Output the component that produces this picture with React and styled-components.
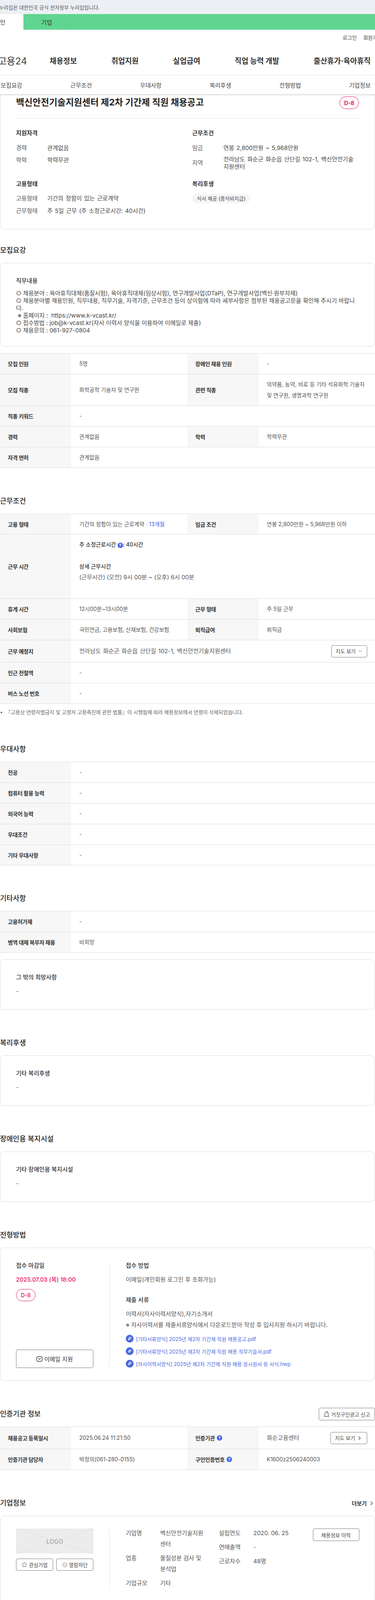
import styled, { createGlobalStyle } from "styled-components";
import { ChevronDown, ChevronRight, Star } from "lucide-react";

const Global = createGlobalStyle`
  html, body {
    margin: 0;
    padding: 0;
    background: #fff;
    overflow-x: hidden;
  }
  body {
    font-family: Inter, "Noto Sans CJK KR", sans-serif;
    font-size: 14px;
    color: #444;
  }
  * { box-sizing: border-box; }
`;

function Help() {
  return <HelpMark>?</HelpMark>;
}

function ClipIcon() {
  return (
    <svg width="20" height="20" viewBox="0 0 20 20">
      <circle cx="10" cy="10" r="10" fill="#4a68e0" />
      <path
        d="M7.2 13.6c-1.3-1.2-.6-3.4.9-5l1.8-1.9c1-.9 2.6-1.3 3.4-.4.9 1 .2 2.6-.7 3.5l-2.2 2.2c-.7.6-1.6.8-2 .3-.5-.5-.2-1.3.4-1.9l2-2"
        fill="none"
        stroke="#fff"
        strokeWidth="1.2"
        strokeLinecap="round"
      />
    </svg>
  );
}

function MailIcon() {
  return (
    <svg width="16" height="16" viewBox="0 0 16 16">
      <rect x="1" y="2" width="14" height="12" rx="3.5" fill="none" stroke="#333" strokeWidth="1.4" />
      <path d="M5 6.5l3 2.6 3-2.6" fill="none" stroke="#333" strokeWidth="1.4" strokeLinecap="round" />
    </svg>
  );
}

function BellIcon() {
  return (
    <svg width="14" height="16" viewBox="0 0 14 16">
      <path d="M2.5 14l.4-8a4.1 4.1 0 0 1 8.2 0l.4 8" fill="none" stroke="#333" strokeWidth="1.1" />
      <path d="M.5 14.2h13" stroke="#333" strokeWidth="1.1" />
      <path d="M7 3.4a2.4 2.4 0 0 1 2.2 2" fill="none" stroke="#333" strokeWidth="1" />
    </svg>
  );
}

function BlockIcon() {
  return (
    <svg width="14" height="14" viewBox="0 0 14 14">
      <circle cx="7" cy="7" r="7" fill="#d6d6d6" />
      <path d="M4.5 4.5l5 5M9.5 4.5l-5 5" stroke="#fff" strokeWidth="1.4" strokeLinecap="round" />
    </svg>
  );
}

function App() {
  return (
    <Page>
      <Global />
      <Header>
        <GovBar>
          <GovText>이 누리집은 대한민국 공식 전자정부 누리집입니다.</GovText>
        </GovBar>
        <UserTabs>
          <UserTab $active>개인</UserTab>
          <UserTab>기업</UserTab>
        </UserTabs>
        <Util>
          <span>로그인</span>
          <span>회원가입</span>
        </Util>
        <Nav>
          <Logo>고용24</Logo>
          <NavItem>채용정보</NavItem>
          <NavItem>취업지원</NavItem>
          <NavItem>실업급여</NavItem>
          <NavItem>직업 능력 개발</NavItem>
          <NavItem>출산휴가·육아휴직</NavItem>
        </Nav>
        <Anchors>
          <span>모집요강</span>
          <span>근무조건</span>
          <span>우대사항</span>
          <span>복리후생</span>
          <span>전형방법</span>
          <span>기업정보</span>
        </Anchors>
      </Header>

      <SummaryCard>
        <TitleRow>
          <Title>백신안전기술지원센터 제2차 기간제 직원 채용공고</Title>
          <DDay>D-8</DDay>
        </TitleRow>
        <SummaryGrid>
          <div>
            <GroupTitle>지원자격</GroupTitle>
            <InfoRow><InfoKey>경력</InfoKey><span>관계없음</span></InfoRow>
            <InfoRow><InfoKey>학력</InfoKey><span>학력무관</span></InfoRow>
          </div>
          <div>
            <GroupTitle>근무조건</GroupTitle>
            <InfoRow><InfoKey>임금</InfoKey><span>연봉 2,800만원 ~ 5,968만원</span></InfoRow>
            <InfoRow><InfoKey>지역</InfoKey><AreaText>전라남도 화순군 화순읍 산단길 102-1, 백신안전기술지원센터</AreaText></InfoRow>
          </div>
          <div>
            <GroupTitle>고용형태</GroupTitle>
            <InfoRow><InfoKey>고용형태</InfoKey><span>기간의 정함이 있는 근로계약</span></InfoRow>
            <InfoRow><InfoKey>근무형태</InfoKey><span>주 5일 근무 (주 소정근로시간: 40시간)</span></InfoRow>
          </div>
          <div>
            <GroupTitle>복리후생</GroupTitle>
            <Chip>식사 제공 (중식비지급)</Chip>
          </div>
        </SummaryGrid>
      </SummaryCard>

      <Section $first>
        <Heading>모집요강</Heading>
        <TextCard>
          <CardTitle>직무내용</CardTitle>
          <JobText>
            ○ 채용분야 : 육아휴직대체(품질시험), 육아휴직대체(임상시험), 연구개발사업(DTaP), 연구개발사업(백신·원부자재)
            <br />○ 채용분야별 채용인원, 직무내용, 직무기술, 자격기준, 근무조건 등이 상이함에 따라 세부사항은 첨부된 채용공고문을 확인해 주시기 바랍니다.
            <br />&nbsp;※ 홈페이지 :&nbsp; https://www.k-vcast.kr/
            <br />○ 접수방법 : job@k-vcast.kr(자사 이력서 양식을 이용하여 이메일로 제출)
            <br />○ 채용문의 : 061-927-0804
          </JobText>
        </TextCard>
        <Table $gap>
          <Row>
            <Th>모집 인원</Th><Td>5명</Td>
            <Th>장애인 채용 인원</Th><Td>-</Td>
          </Row>
          <Row $h={81}>
            <Th>모집 직종</Th><Td>화학공학 기술자 및 연구원</Td>
            <Th>관련 직종</Th><Td>의약품, 농약, 비료 등 기타 석유화학 기술자 및 연구원, 생명과학 연구원</Td>
          </Row>
          <Row $wide>
            <Th>직종 키워드</Th><Td>-</Td>
          </Row>
          <Row>
            <Th>경력</Th><Td>관계없음</Td>
            <Th>학력</Th><Td>학력무관</Td>
          </Row>
          <Row $wide>
            <Th>자격 면허</Th><Td>관계없음</Td>
          </Row>
        </Table>
      </Section>

      <Section>
        <Heading>근무조건</Heading>
        <Table>
          <Row>
            <Th>고용 형태</Th><Td>기간의 정함이 있는 근로계약 <Accent>· 13개월</Accent></Td>
            <Th>임금 조건</Th><Td>연봉 2,800만원 ~ 5,968만원 이하</Td>
          </Row>
          <Row $wide $h={165}>
            <Th>근무 시간</Th>
            <Td>
              <Strong>주 소정근로시간 <Help />: 40시간</Strong>
              <br />
              <br />
              <Strong>상세 근무시간</Strong>
              <br />
              <WorkTime>(근무시간) (오전) 9시 00분 ~ (오후) 6시 00분</WorkTime>
              <br />
              <br />
            </Td>
          </Row>
          <Row>
            <Th>휴게 시간</Th><Td>12시00분~13시00분</Td>
            <Th>근무 형태</Th><Td>주 5일 근무</Td>
          </Row>
          <Row>
            <Th>사회보험</Th><Td>국민연금, 고용보험, 산재보험, 건강보험</Td>
            <Th>퇴직급여</Th><Td>퇴직금</Td>
          </Row>
          <Row $wide $h={57}>
            <Th>근무 예정지</Th>
            <SplitTd>
              <span>전라남도 화순군 화순읍 산단길 102-1, 백신안전기술지원센터</span>
              <SmallButton>지도 보기 <ChevronDown size={14} strokeWidth={1.5} /></SmallButton>
            </SplitTd>
          </Row>
          <Row $wide>
            <Th>인근 전철역</Th><Td>-</Td>
          </Row>
          <Row $wide>
            <Th>버스 노선 번호</Th><Td>-</Td>
          </Row>
        </Table>
        <Footnote>• &nbsp;『고용상 연령차별금지 및 고령자 고용촉진에 관한 법률』이 시행됨에 따라 채용정보에서 연령이 삭제되었습니다.</Footnote>
      </Section>

      <Section>
        <Heading>우대사항</Heading>
        <Table>
          {["전공", "컴퓨터 활용 능력", "외국어 능력", "우대조건", "기타 우대사항"].map((name) => (
            <Row $wide key={name}>
              <Th>{name}</Th><Td>-</Td>
            </Row>
          ))}
        </Table>
      </Section>

      <Section>
        <Heading>기타사항</Heading>
        <Table>
          <Row $wide>
            <Th>고용허가제</Th><Td>-</Td>
          </Row>
          <Row $wide>
            <Th>병역 대체 복무자 채용</Th><Td>비희망</Td>
          </Row>
        </Table>
        <TextCard $short $spaced>
          <CardTitle>그 밖의 희망사항</CardTitle>
          <CardBody>-</CardBody>
        </TextCard>
      </Section>

      <Section>
        <Heading>복리후생</Heading>
        <TextCard $short>
          <CardTitle>기타 복리후생</CardTitle>
          <CardBody>-</CardBody>
        </TextCard>
      </Section>

      <Section>
        <Heading>장애인용 복지시설</Heading>
        <TextCard $short>
          <CardTitle>기타 장애인용 복지시설</CardTitle>
          <CardBody>-</CardBody>
        </TextCard>
      </Section>

      <Section>
        <Heading>전형방법</Heading>
        <SplitCard>
          <SideColumn>
            <DeadlineBlock>
              <CardTitle>접수 마감일</CardTitle>
              <Deadline>2025.07.03 (목) 18:00</Deadline>
              <DDay $small>D-8</DDay>
            </DeadlineBlock>
            <ApplyButton><MailIcon /> 이메일 지원</ApplyButton>
          </SideColumn>
          <MainColumn>
            <CardTitle>접수 방법</CardTitle>
            <MainText>이메일(개인회원 로그인 후 조회가능)</MainText>
            <CardTitle $spaced>제출 서류</CardTitle>
            <MainText>
              이력서(자사이력서양식),자기소개서
              <br />※ 자사이력서를 제출서류양식에서 다운로드받아 작성 후 입사지원 하시기 바랍니다.
            </MainText>
            <FileList>
              <FileLink><ClipIcon /> [기타서류양식] 2025년 제2차 기간제 직원 채용공고.pdf</FileLink>
              <FileLink><ClipIcon /> [기타서류양식] 2025년 제2차 기간제 직원 채용 직무기술서.pdf</FileLink>
              <FileLink><ClipIcon /> [자사이력서양식] 2025년 제2차 기간제 직원 채용 응시원서 등 서식.hwp</FileLink>
            </FileList>
          </MainColumn>
        </SplitCard>
      </Section>

      <Section>
        <HeadingRow>
          <Heading>인증기관 정보</Heading>
          <ReportButton><BellIcon /> 거짓구인광고 신고</ReportButton>
        </HeadingRow>
        <Table>
          <Row $h={57}>
            <Th>채용공고 등록일시</Th><Td>2025.06.24 11:21:50</Td>
            <Th>인증기관 <Help /></Th>
            <SplitTd>
              <span>화순고용센터</span>
              <SmallButton $wide>지도 보기 <ChevronRight size={15} strokeWidth={2} /></SmallButton>
            </SplitTd>
          </Row>
          <Row>
            <Th>인증기관 담당자</Th><Td>박정의(061-280-0155)</Td>
            <Th>구인인증번호 <Help /></Th><Td>K1600z2506240003</Td>
          </Row>
        </Table>
      </Section>

      <Section>
        <HeadingRow>
          <Heading>기업정보</Heading>
          <More>더보기 <ChevronRight size={17} strokeWidth={1.5} /></More>
        </HeadingRow>
        <SplitCard $company>
          <SideColumn>
            <div>
              <LogoBox>
                <LogoLines viewBox="0 0 199 64" preserveAspectRatio="none">
                  <path d="M0 0l72 23M199 0l-72 23M0 64l72-23M199 64l-72-23" stroke="#dcdcdc" strokeWidth="1" fill="none" />
                </LogoLines>
                <LogoText>LOGO</LogoText>
              </LogoBox>
              <LogoActions>
                <ActionButton><Star size={15} strokeWidth={1.3} color="#333" /> 관심기업</ActionButton>
                <ActionButton><BlockIcon /> 열람차단</ActionButton>
              </LogoActions>
            </div>
          </SideColumn>
          <CompanyColumn>
            <CompanyList>
              <CompanyRow><CompanyKey>기업명</CompanyKey><CompanyValue>백신안전기술지원센터</CompanyValue></CompanyRow>
              <CompanyRow><CompanyKey>업종</CompanyKey><CompanyValue>물질성분 검사 및 분석업</CompanyValue></CompanyRow>
              <CompanyRow><CompanyKey>기업규모</CompanyKey><CompanyValue>기타</CompanyValue></CompanyRow>
            </CompanyList>
            <CompanyList>
              <CompanyRow><CompanyKey>설립연도</CompanyKey><CompanyValue>2020. 06. 25</CompanyValue></CompanyRow>
              <CompanyRow><CompanyKey>연매출액</CompanyKey><CompanyValue>-</CompanyValue></CompanyRow>
              <CompanyRow><CompanyKey>근로자수</CompanyKey><CompanyValue>48명</CompanyValue></CompanyRow>
            </CompanyList>
            <HistoryButton>채용정보 이력</HistoryButton>
          </CompanyColumn>
        </SplitCard>
      </Section>
    </Page>
  );
}

const Page = styled.div`
  width: 960px;
  overflow: hidden;
`;

const Header = styled.header`
  position: relative;
  z-index: 2;
  background: #fff;
  border-bottom: 1px solid #ddd;
  box-shadow: 0 1px 3px rgba(0, 0, 0, 0.18);
`;

const GovBar = styled.div`
  height: 36px;
  background: #ecf0f5;
  display: flex;
  align-items: center;
`;

const GovText = styled.span`
  margin-left: -18px;
  font-size: 13px;
  color: #555;
  white-space: nowrap;
`;

const UserTabs = styled.div`
  display: flex;
  height: 40px;
  margin-left: -60px;
  background: #60d591;
`;

const UserTab = styled.div`
  width: 120px;
  display: flex;
  align-items: center;
  justify-content: center;
  font-size: 15px;
  color: #333;
  background: ${(p) => (p.$active ? "#fff" : "transparent")};
  border-right: ${(p) => (p.$active ? "0" : "1px solid #58c985")};
`;

const Util = styled.div`
  display: flex;
  gap: 17px;
  margin-right: -18px;
  padding-top: 10px;
  justify-content: flex-end;
  font-size: 13px;
  line-height: 20px;
  color: #444;
  white-space: nowrap;
`;

const Nav = styled.nav`
  display: flex;
  gap: 88px;
  align-items: center;
  height: 30px;
  margin: 33px 0 23px;
  white-space: nowrap;
`;

const Logo = styled.div`
  flex: 0 0 79px;
  margin-left: -5px;
  margin-right: -35px;
  font-size: 24px;
  font-weight: 500;
  color: #555;
`;

const NavItem = styled.div`
  font-size: 19px;
  font-weight: 700;
  color: #333;
`;

const Anchors = styled.div`
  display: grid;
  grid-template-columns: repeat(6, 178.4px);
  margin-left: -60px;
  height: 49px;
  border-top: 1px solid #e5e5e5;
  font-size: 15px;
  color: #444;
  align-items: center;
  justify-items: center;
`;

const SummaryCard = styled.section`
  padding: 5px 40px 35px;
  border: 1px solid #ddd;
  border-top: 0;
  border-radius: 0 0 10px 10px;
`;

const TitleRow = styled.div`
  display: flex;
  justify-content: space-between;
  align-items: flex-start;
  height: 57px;
  border-bottom: 1px solid #e5e5e5;
`;

const Title = styled.h1`
  margin: 0;
  font-size: 23px;
  line-height: 30px;
  font-weight: 700;
  color: #222;
`;

const DDay = styled.div`
  width: 50px;
  height: ${(p) => (p.$small ? "31px" : "32px")};
  margin-top: ${(p) => (p.$small ? "12.5px" : "0")};
  border: 1px solid #e8115f;
  border-radius: 16px;
  display: flex;
  align-items: center;
  justify-content: center;
  font-size: 14px;
  font-weight: ${(p) => (p.$small ? 500 : 700)};
  color: #e8115f;
`;

const SummaryGrid = styled.div`
  display: grid;
  grid-template-columns: 451px 1fr;
  row-gap: 24px;
  padding-top: 26px;
`;

const GroupTitle = styled.div`
  margin-bottom: 14px;
  font-size: 15px;
  line-height: 22px;
  font-weight: 700;
  color: #333;
`;

const InfoRow = styled.div`
  display: flex;
  align-items: center;
  min-height: 24px;
  margin-bottom: 7.5px;
  font-size: 15px;
  line-height: 19px;
  word-spacing: 1.5px;
  color: #444;
  &:last-child { margin-bottom: 0; }
`;

const InfoKey = styled.span`
  flex: 0 0 80px;
  color: #555;
`;

const AreaText = styled.span`
  max-width: 340px;
`;

const Chip = styled.div`
  display: inline-flex;
  align-items: center;
  height: 24px;
  padding: 0 12px;
  border-radius: 12px;
  background: #f5f5f5;
  font-size: 13px;
  color: #444;
`;

const Section = styled.section`
  margin-top: ${(p) => (p.$first ? "41px" : "72px")};
`;

const Heading = styled.h2`
  margin: 0 0 19px;
  font-size: 18px;
  line-height: 26px;
  font-weight: 500;
  color: #222;
`;

const HeadingRow = styled.div`
  display: flex;
  justify-content: space-between;
  align-items: flex-start;
`;

const TextCard = styled.div`
  min-height: ${(p) => (p.$short ? "129px" : "214px")};
  margin-top: ${(p) => (p.$spaced ? "17px" : "0")};
  padding: 34px 40px 31px;
  border: 1px solid #ddd;
  border-radius: 10px;
`;

const CardTitle = styled.div`
  margin-top: ${(p) => (p.$spaced ? "27px" : "0")};
  font-size: 15px;
  line-height: 22px;
  font-weight: 500;
  color: #333;
`;

const JobText = styled.div`
  margin-top: 11px;
  font-size: 15px;
  line-height: 19px;
  color: #444;
  word-break: break-all;
`;

const CardBody = styled.div`
  margin-top: 15px;
  font-size: 15px;
  line-height: 19px;
  color: #555;
`;

const Table = styled.div`
  margin-top: ${(p) => (p.$gap ? "17px" : "0")};
  border-top: 1px solid #ddd;
`;

const Row = styled.div`
  display: grid;
  grid-template-columns: ${(p) => (p.$wide ? "182px 1fr" : "182px 298px 182px 298px")};
  min-height: ${(p) => p.$h || 52.9}px;
  border-bottom: 1px solid #ddd;
`;

const Th = styled.div`
  display: flex;
  align-items: center;
  gap: 5px;
  padding-left: 20px;
  background: #f7f7f7;
  font-size: 14px;
  font-weight: 700;
  letter-spacing: -0.4px;
  color: #333;
`;

const Td = styled.div`
  align-self: center;
  padding: 0 20px 0 21px;
  font-size: 14px;
  line-height: 28px;
  color: #555;
`;

const SplitTd = styled(Td)`
  display: flex;
  align-items: center;
  justify-content: space-between;
  font-size: 15px;
  word-spacing: 1.5px;
`;

const Accent = styled.span`
  color: #3d63dd;
`;

const Strong = styled.span`
  font-weight: 500;
  color: #333;
`;

const WorkTime = styled.span`
  font-size: 15px;
`;

const HelpMark = styled.span`
  display: inline-flex;
  align-items: center;
  justify-content: center;
  width: 14px;
  height: 14px;
  border-radius: 50%;
  background: #4a68e0;
  color: #fff;
  font-size: 10px;
  font-weight: 700;
  line-height: 1;
  vertical-align: -1px;
`;

const SmallButton = styled.button`
  display: inline-flex;
  align-items: center;
  justify-content: center;
  gap: 4px;
  width: ${(p) => (p.$wide ? "94px" : "92px")};
  height: 31px;
  padding: 0;
  border: 1px solid #777;
  border-radius: 4px;
  background: #fff;
  font: inherit;
  font-size: 13px;
  word-spacing: 0;
  color: #444;
`;

const Footnote = styled.div`
  margin-top: 11px;
  margin-bottom: 1px;
  font-size: 13px;
  line-height: 20px;
  color: #666;
`;

const SplitCard = styled.div`
  display: flex;
  min-height: ${(p) => (p.$company ? "221px" : "341px")};
  padding: ${(p) => (p.$company ? "32px 40px 30px" : "32px 40px")};
  border: 1px solid #ddd;
  border-radius: 10px;
`;

const SideColumn = styled.div`
  flex: 0 0 240px;
  display: flex;
  flex-direction: column;
  justify-content: space-between;
  padding-right: 41px;
  border-right: 1px solid #e8e8e8;
`;

const DeadlineBlock = styled.div`
  padding-top: 2px;
`;

const Deadline = styled.div`
  margin-top: 14px;
  font-size: 15px;
  line-height: 22px;
  font-weight: 500;
  color: #e8115f;
`;

const ApplyButton = styled.button`
  display: flex;
  align-items: center;
  justify-content: center;
  gap: 4px;
  height: 47px;
  border: 1px solid #777;
  border-radius: 4px;
  background: #fff;
  font: inherit;
  font-size: 15px;
  color: #333;
`;

const MainColumn = styled.div`
  flex: 1;
  padding: 2px 0 0 41px;
`;

const MainText = styled.div`
  margin-top: 11px;
  font-size: 15px;
  line-height: 28px;
  color: #555;
`;

const FileList = styled.div`
  display: flex;
  flex-direction: column;
  gap: 12px;
  margin-top: 11px;
`;

const FileLink = styled.div`
  display: flex;
  align-items: center;
  gap: 6px;
  height: 20px;
  font-size: 13px;
  color: #4a68e0;
`;

const ReportButton = styled.button`
  display: flex;
  align-items: center;
  justify-content: center;
  gap: 5px;
  width: 144px;
  height: 32px;
  margin: -3px 0;
  padding: 0;
  border: 1px solid #777;
  border-radius: 4px;
  background: #fff;
  font: inherit;
  font-size: 13px;
  color: #444;
`;

const More = styled.div`
  display: flex;
  align-items: center;
  gap: 4px;
  height: 26px;
  font-size: 14px;
  font-weight: 700;
  color: #333;
`;

const LogoBox = styled.div`
  position: relative;
  height: 64px;
  display: flex;
  align-items: center;
  justify-content: center;
  background: #ececec;
`;

const LogoLines = styled.svg`
  position: absolute;
  inset: 0;
  width: 100%;
  height: 100%;
`;

const LogoText = styled.span`
  font-family: "Noto Sans CJK KR", sans-serif;
  font-size: 16px;
  font-weight: 500;
  color: #aaa;
`;

const LogoActions = styled.div`
  display: flex;
  gap: 8px;
  margin-top: 13px;
`;

const ActionButton = styled.button`
  flex: 1;
  display: flex;
  align-items: center;
  justify-content: center;
  gap: 4px;
  height: 31px;
  padding: 0;
  border: 1px solid #777;
  border-radius: 4px;
  background: #fff;
  font: inherit;
  font-size: 13px;
  color: #444;
`;

const CompanyColumn = styled.div`
  flex: 1;
  display: grid;
  grid-template-columns: 238.5px 240px 1fr;
  padding-left: 41px;
`;

const CompanyList = styled.div`
  display: flex;
  flex-direction: column;
  gap: 8px;
  margin-top: -2px;
`;

const CompanyRow = styled.div`
  display: flex;
  font-size: 15px;
  line-height: 28px;
  color: #555;
`;

const CompanyKey = styled.span`
  flex: 0 0 88px;
`;

const CompanyValue = styled.span`
  width: 118px;
`;

const HistoryButton = styled.button`
  justify-self: end;
  width: 119px;
  height: 32px;
  padding: 0;
  border: 1px solid #777;
  border-radius: 4px;
  background: #fff;
  font: inherit;
  font-size: 13px;
  color: #444;
`;

export default App;
